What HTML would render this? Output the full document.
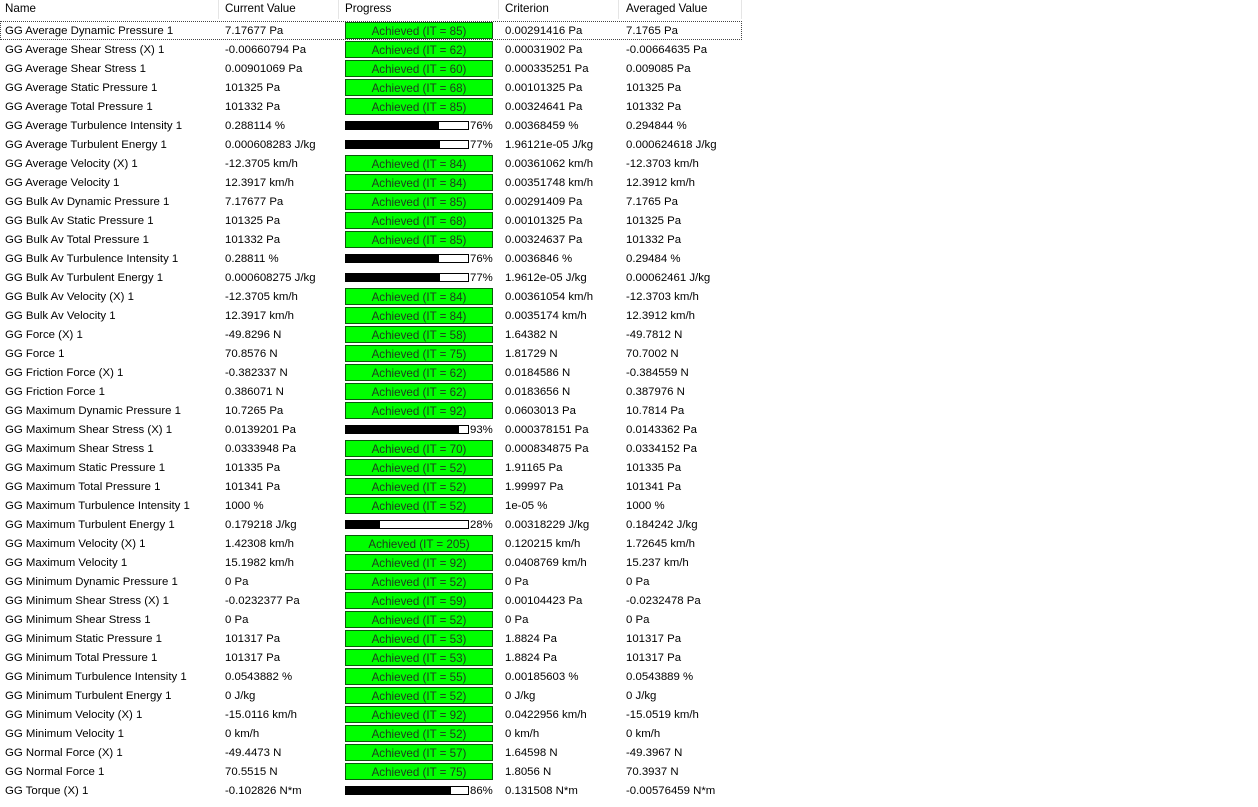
<!DOCTYPE html>
<html><head><meta charset="utf-8"><style>
body{margin:0;width:1258px;height:807px;background:#fff;font-family:"Liberation Sans",sans-serif;font-size:11.4px;color:#000;overflow:hidden;position:relative}
.h{position:absolute;top:0;height:19px;line-height:18px;border-right:1px solid #e5e5e5;box-sizing:border-box;padding-left:5px;color:#000;font-size:11.6px}
.r{position:absolute;left:0;width:742px;height:19px;line-height:21px}
.r span{position:absolute;top:0;white-space:nowrap}
.c1{left:5px}.c2{left:225px}.c4{left:505px}.c5{left:626px}
.g{position:absolute;left:345px;top:1px;width:148px;height:17px;box-sizing:border-box;background:#00ff00;border:1px solid #0a5a0a;text-align:center;line-height:17px;color:#1f3a1f;font-size:11.6px}
.b{position:absolute;left:345px;top:5px;width:124px;height:9px;box-sizing:border-box;border:1px solid #000;background:#fff}
.b i{position:absolute;left:0;top:0;bottom:0;background:#000}
.p{left:470px}
.f{outline:1px dotted #444;outline-offset:-1px}
</style></head><body>
<div class="h" style="left:0;width:219px">Name</div>
<div class="h" style="left:219px;width:120px;padding-left:6px">Current Value</div>
<div class="h" style="left:339px;width:160px;padding-left:6px">Progress</div>
<div class="h" style="left:499px;width:120px;padding-left:6px">Criterion</div>
<div class="h" style="left:619px;width:123px;padding-left:7px">Averaged Value</div>

<div class="r f" style="top:21px"><span class="c1">GG Average Dynamic Pressure 1</span><span class="c2">7.17677 Pa</span><div class="g">Achieved (IT = 85)</div><span class="c4">0.00291416 Pa</span><span class="c5">7.1765 Pa</span></div>
<div class="r" style="top:40px"><span class="c1">GG Average Shear Stress (X) 1</span><span class="c2">-0.00660794 Pa</span><div class="g">Achieved (IT = 62)</div><span class="c4">0.00031902 Pa</span><span class="c5">-0.00664635 Pa</span></div>
<div class="r" style="top:59px"><span class="c1">GG Average Shear Stress 1</span><span class="c2">0.00901069 Pa</span><div class="g">Achieved (IT = 60)</div><span class="c4">0.000335251 Pa</span><span class="c5">0.009085 Pa</span></div>
<div class="r" style="top:78px"><span class="c1">GG Average Static Pressure 1</span><span class="c2">101325 Pa</span><div class="g">Achieved (IT = 68)</div><span class="c4">0.00101325 Pa</span><span class="c5">101325 Pa</span></div>
<div class="r" style="top:97px"><span class="c1">GG Average Total Pressure 1</span><span class="c2">101332 Pa</span><div class="g">Achieved (IT = 85)</div><span class="c4">0.00324641 Pa</span><span class="c5">101332 Pa</span></div>
<div class="r" style="top:116px"><span class="c1">GG Average Turbulence Intensity 1</span><span class="c2">0.288114 %</span><div class="b"><i style="width:76%"></i></div><span class="p">76%</span><span class="c4">0.00368459 %</span><span class="c5">0.294844 %</span></div>
<div class="r" style="top:135px"><span class="c1">GG Average Turbulent Energy 1</span><span class="c2">0.000608283 J/kg</span><div class="b"><i style="width:77%"></i></div><span class="p">77%</span><span class="c4">1.96121e-05 J/kg</span><span class="c5">0.000624618 J/kg</span></div>
<div class="r" style="top:154px"><span class="c1">GG Average Velocity (X) 1</span><span class="c2">-12.3705 km/h</span><div class="g">Achieved (IT = 84)</div><span class="c4">0.00361062 km/h</span><span class="c5">-12.3703 km/h</span></div>
<div class="r" style="top:173px"><span class="c1">GG Average Velocity 1</span><span class="c2">12.3917 km/h</span><div class="g">Achieved (IT = 84)</div><span class="c4">0.00351748 km/h</span><span class="c5">12.3912 km/h</span></div>
<div class="r" style="top:192px"><span class="c1">GG Bulk Av Dynamic Pressure 1</span><span class="c2">7.17677 Pa</span><div class="g">Achieved (IT = 85)</div><span class="c4">0.00291409 Pa</span><span class="c5">7.1765 Pa</span></div>
<div class="r" style="top:211px"><span class="c1">GG Bulk Av Static Pressure 1</span><span class="c2">101325 Pa</span><div class="g">Achieved (IT = 68)</div><span class="c4">0.00101325 Pa</span><span class="c5">101325 Pa</span></div>
<div class="r" style="top:230px"><span class="c1">GG Bulk Av Total Pressure 1</span><span class="c2">101332 Pa</span><div class="g">Achieved (IT = 85)</div><span class="c4">0.00324637 Pa</span><span class="c5">101332 Pa</span></div>
<div class="r" style="top:249px"><span class="c1">GG Bulk Av Turbulence Intensity 1</span><span class="c2">0.28811 %</span><div class="b"><i style="width:76%"></i></div><span class="p">76%</span><span class="c4">0.0036846 %</span><span class="c5">0.29484 %</span></div>
<div class="r" style="top:268px"><span class="c1">GG Bulk Av Turbulent Energy 1</span><span class="c2">0.000608275 J/kg</span><div class="b"><i style="width:77%"></i></div><span class="p">77%</span><span class="c4">1.9612e-05 J/kg</span><span class="c5">0.00062461 J/kg</span></div>
<div class="r" style="top:287px"><span class="c1">GG Bulk Av Velocity (X) 1</span><span class="c2">-12.3705 km/h</span><div class="g">Achieved (IT = 84)</div><span class="c4">0.00361054 km/h</span><span class="c5">-12.3703 km/h</span></div>
<div class="r" style="top:306px"><span class="c1">GG Bulk Av Velocity 1</span><span class="c2">12.3917 km/h</span><div class="g">Achieved (IT = 84)</div><span class="c4">0.0035174 km/h</span><span class="c5">12.3912 km/h</span></div>
<div class="r" style="top:325px"><span class="c1">GG Force (X) 1</span><span class="c2">-49.8296 N</span><div class="g">Achieved (IT = 58)</div><span class="c4">1.64382 N</span><span class="c5">-49.7812 N</span></div>
<div class="r" style="top:344px"><span class="c1">GG Force 1</span><span class="c2">70.8576 N</span><div class="g">Achieved (IT = 75)</div><span class="c4">1.81729 N</span><span class="c5">70.7002 N</span></div>
<div class="r" style="top:363px"><span class="c1">GG Friction Force (X) 1</span><span class="c2">-0.382337 N</span><div class="g">Achieved (IT = 62)</div><span class="c4">0.0184586 N</span><span class="c5">-0.384559 N</span></div>
<div class="r" style="top:382px"><span class="c1">GG Friction Force 1</span><span class="c2">0.386071 N</span><div class="g">Achieved (IT = 62)</div><span class="c4">0.0183656 N</span><span class="c5">0.387976 N</span></div>
<div class="r" style="top:401px"><span class="c1">GG Maximum Dynamic Pressure 1</span><span class="c2">10.7265 Pa</span><div class="g">Achieved (IT = 92)</div><span class="c4">0.0603013 Pa</span><span class="c5">10.7814 Pa</span></div>
<div class="r" style="top:420px"><span class="c1">GG Maximum Shear Stress (X) 1</span><span class="c2">0.0139201 Pa</span><div class="b"><i style="width:93%"></i></div><span class="p">93%</span><span class="c4">0.000378151 Pa</span><span class="c5">0.0143362 Pa</span></div>
<div class="r" style="top:439px"><span class="c1">GG Maximum Shear Stress 1</span><span class="c2">0.0333948 Pa</span><div class="g">Achieved (IT = 70)</div><span class="c4">0.000834875 Pa</span><span class="c5">0.0334152 Pa</span></div>
<div class="r" style="top:458px"><span class="c1">GG Maximum Static Pressure 1</span><span class="c2">101335 Pa</span><div class="g">Achieved (IT = 52)</div><span class="c4">1.91165 Pa</span><span class="c5">101335 Pa</span></div>
<div class="r" style="top:477px"><span class="c1">GG Maximum Total Pressure 1</span><span class="c2">101341 Pa</span><div class="g">Achieved (IT = 52)</div><span class="c4">1.99997 Pa</span><span class="c5">101341 Pa</span></div>
<div class="r" style="top:496px"><span class="c1">GG Maximum Turbulence Intensity 1</span><span class="c2">1000 %</span><div class="g">Achieved (IT = 52)</div><span class="c4">1e-05 %</span><span class="c5">1000 %</span></div>
<div class="r" style="top:515px"><span class="c1">GG Maximum Turbulent Energy 1</span><span class="c2">0.179218 J/kg</span><div class="b"><i style="width:28%"></i></div><span class="p">28%</span><span class="c4">0.00318229 J/kg</span><span class="c5">0.184242 J/kg</span></div>
<div class="r" style="top:534px"><span class="c1">GG Maximum Velocity (X) 1</span><span class="c2">1.42308 km/h</span><div class="g">Achieved (IT = 205)</div><span class="c4">0.120215 km/h</span><span class="c5">1.72645 km/h</span></div>
<div class="r" style="top:553px"><span class="c1">GG Maximum Velocity 1</span><span class="c2">15.1982 km/h</span><div class="g">Achieved (IT = 92)</div><span class="c4">0.0408769 km/h</span><span class="c5">15.237 km/h</span></div>
<div class="r" style="top:572px"><span class="c1">GG Minimum Dynamic Pressure 1</span><span class="c2">0 Pa</span><div class="g">Achieved (IT = 52)</div><span class="c4">0 Pa</span><span class="c5">0 Pa</span></div>
<div class="r" style="top:591px"><span class="c1">GG Minimum Shear Stress (X) 1</span><span class="c2">-0.0232377 Pa</span><div class="g">Achieved (IT = 59)</div><span class="c4">0.00104423 Pa</span><span class="c5">-0.0232478 Pa</span></div>
<div class="r" style="top:610px"><span class="c1">GG Minimum Shear Stress 1</span><span class="c2">0 Pa</span><div class="g">Achieved (IT = 52)</div><span class="c4">0 Pa</span><span class="c5">0 Pa</span></div>
<div class="r" style="top:629px"><span class="c1">GG Minimum Static Pressure 1</span><span class="c2">101317 Pa</span><div class="g">Achieved (IT = 53)</div><span class="c4">1.8824 Pa</span><span class="c5">101317 Pa</span></div>
<div class="r" style="top:648px"><span class="c1">GG Minimum Total Pressure 1</span><span class="c2">101317 Pa</span><div class="g">Achieved (IT = 53)</div><span class="c4">1.8824 Pa</span><span class="c5">101317 Pa</span></div>
<div class="r" style="top:667px"><span class="c1">GG Minimum Turbulence Intensity 1</span><span class="c2">0.0543882 %</span><div class="g">Achieved (IT = 55)</div><span class="c4">0.00185603 %</span><span class="c5">0.0543889 %</span></div>
<div class="r" style="top:686px"><span class="c1">GG Minimum Turbulent Energy 1</span><span class="c2">0 J/kg</span><div class="g">Achieved (IT = 52)</div><span class="c4">0 J/kg</span><span class="c5">0 J/kg</span></div>
<div class="r" style="top:705px"><span class="c1">GG Minimum Velocity (X) 1</span><span class="c2">-15.0116 km/h</span><div class="g">Achieved (IT = 92)</div><span class="c4">0.0422956 km/h</span><span class="c5">-15.0519 km/h</span></div>
<div class="r" style="top:724px"><span class="c1">GG Minimum Velocity 1</span><span class="c2">0 km/h</span><div class="g">Achieved (IT = 52)</div><span class="c4">0 km/h</span><span class="c5">0 km/h</span></div>
<div class="r" style="top:743px"><span class="c1">GG Normal Force (X) 1</span><span class="c2">-49.4473 N</span><div class="g">Achieved (IT = 57)</div><span class="c4">1.64598 N</span><span class="c5">-49.3967 N</span></div>
<div class="r" style="top:762px"><span class="c1">GG Normal Force 1</span><span class="c2">70.5515 N</span><div class="g">Achieved (IT = 75)</div><span class="c4">1.8056 N</span><span class="c5">70.3937 N</span></div>
<div class="r" style="top:781px"><span class="c1">GG Torque (X) 1</span><span class="c2">-0.102826 N*m</span><div class="b"><i style="width:86%"></i></div><span class="p">86%</span><span class="c4">0.131508 N*m</span><span class="c5">-0.00576459 N*m</span></div>
</body></html>
